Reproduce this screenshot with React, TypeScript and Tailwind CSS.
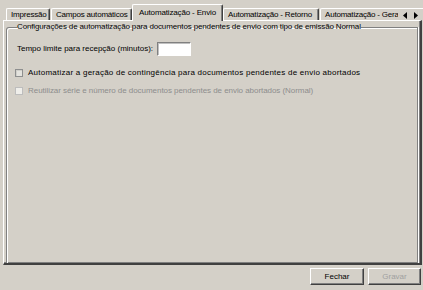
import React from "react";

function Tab({ label, w, active }: { label: string; w: string; active?: boolean }) {
  if (active) {
    return (
      <div
        className={`${w} h-[17px] mb-[-1px] relative z-10 bg-[#d4d0c8] border-t border-l border-white border-r border-r-[#404040] shadow-[inset_-1px_0_0_#808080] rounded-t-[2px] flex items-center justify-center shrink-0 -mx-[1px]`}
      >
        <span className="whitespace-nowrap pb-[1px] tracking-[-0.15px]">{label}</span>
      </div>
    );
  }
  return (
    <div
      className={`${w} h-[12px] bg-[#d4d0c8] border-t border-l border-white border-r border-r-[#404040] shadow-[inset_-1px_0_0_#808080] rounded-t-[2px] flex items-center pl-[4px] shrink-0 overflow-hidden`}
    >
      <span className="whitespace-nowrap tracking-[-0.2px]">{label}</span>
    </div>
  );
}

export default function App() {
  return (
    <div className="w-[423px] h-[290px] bg-[#d4d0c8] flex flex-col text-black text-[8px] leading-none font-['Liberation_Sans',Arial,sans-serif] overflow-hidden">
      {/* tab strip */}
      <div className="h-[20px] flex items-end pl-[6px] gap-[1px] relative">
        <Tab w="w-[44px]" label="Impressão" />
        <Tab w="w-[81px]" label="Campos automáticos" />
        <Tab w="w-[91px]" label="Automatização - Envio" active />
        <Tab w="w-[96px]" label="Automatização - Retorno" />
        <Tab w="w-[100px]" label="Automatização - Gerais" />
        <div className="absolute right-0 top-[8px] w-[25px] h-[12px] bg-[#d4d0c8] border-t border-white flex items-center gap-[7px] pl-[5px] pt-[1px]">
          <svg width="4" height="7" viewBox="0 0 4 7">
            <path d="M4 0 L0 3.5 L4 7 Z" fill="#000" />
          </svg>
          <svg width="4" height="7" viewBox="0 0 4 7">
            <path d="M0 0 L4 3.5 L0 7 Z" fill="#000" />
          </svg>
        </div>
      </div>

      {/* tab panel */}
      <div className="ml-[3px] mr-[1px] h-[245px] border-t border-l border-white border-r-2 border-b-2 border-r-[#404040] border-b-[#404040] shadow-[inset_-1px_-1px_0_#808080] flex flex-col overflow-hidden">
        <fieldset className="ml-[2px] mr-[2px] mt-[2px] flex-1 border border-[#808080] border-b-0 rounded-tl-[3px] rounded-tr-[1px] shadow-[inset_1px_1px_0_#ffffff,1px_0_0_#ffffff] pl-[8px] flex flex-col">
          <legend className="ml-[2px] px-0 whitespace-nowrap tracking-[-0.14px]">
            Configurações de automatização para documentos pendentes de envio com tipo de emissão Normal
          </legend>

          <div className="mt-[11px] flex items-center h-[14px]">
            <span className="ml-[2px] whitespace-nowrap">Tempo limite para recepção (minutos):</span>
            <div className="ml-[4px] w-[34px] h-[14px] bg-white border-t border-l border-[#808080] border-b border-r border-b-white border-r-white shadow-[inset_1px_1px_0_#c0c0c0]" />
          </div>

          <div className="mt-[12px] flex items-center h-[9px]">
            <div className="w-[8px] h-[8px] border border-[#8e8f8f] bg-[#e4e3de] shadow-[inset_1px_1px_0_#d0cfca]" />
            <span className="ml-[5px] whitespace-nowrap tracking-[0.24px]">
              Automatizar a geração de contingência para documentos pendentes de envio abortados
            </span>
          </div>

          <div className="mt-[9px] flex items-center h-[9px]">
            <div className="w-[8px] h-[8px] border border-[#bdbdbd] bg-[#efeeea]" />
            <span className="ml-[5px] whitespace-nowrap text-[#8d8d8d] tracking-[-0.05px]">
              Reutilizar série e número de documentos pendentes de envio abortados (Normal)
            </span>
          </div>
        </fieldset>
      </div>

      {/* footer */}
      <div className="flex justify-end gap-[4px] pr-[2px] pt-[3px]">
        <button className="w-[54px] h-[17px] bg-[#d4d0c8] border-t border-l border-white border-r border-b border-r-[#404040] border-b-[#404040] shadow-[inset_-1px_-1px_0_#808080] flex items-center justify-center">
          Fechar
        </button>
        <button className="w-[53px] h-[17px] bg-[#d4d0c8] border-t border-l border-white border-r border-b border-r-[#404040] border-b-[#404040] shadow-[inset_-1px_-1px_0_#808080] flex items-center justify-center text-[#a0a0a0]">
          Gravar
        </button>
      </div>
    </div>
  );
}
